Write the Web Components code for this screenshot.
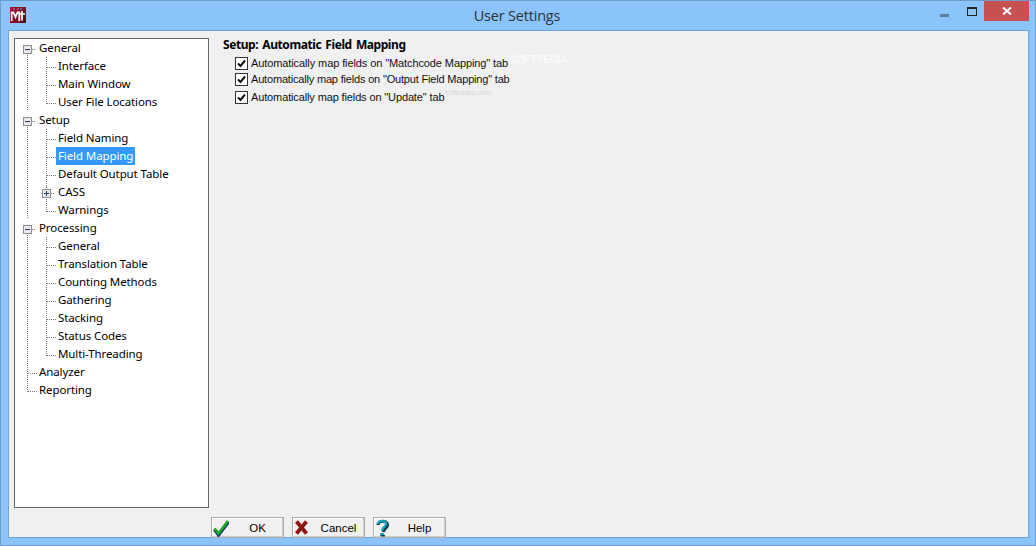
<!DOCTYPE html>
<html><head><meta charset="utf-8"><title>User Settings</title>
<style>
html,body{margin:0;padding:0;width:1036px;height:546px;overflow:hidden;background:#8ac4fb}
</style></head><body>
<app-window>
<title-bar slot="title">User Settings</title-bar>
<tree-view slot="tree">
 <tree-row cells="-" >General</tree-row>
 <tree-row cells="I L">Interface</tree-row>
 <tree-row cells="I L">Main Window</tree-row>
 <tree-row cells="I l">User File Locations</tree-row>
 <tree-row cells="-">Setup</tree-row>
 <tree-row cells="I L">Field Naming</tree-row>
 <tree-row cells="I L" selected>Field Mapping</tree-row>
 <tree-row cells="I L">Default Output Table</tree-row>
 <tree-row cells="I +">CASS</tree-row>
 <tree-row cells="I l">Warnings</tree-row>
 <tree-row cells="-">Processing</tree-row>
 <tree-row cells="I L">General</tree-row>
 <tree-row cells="I L">Translation Table</tree-row>
 <tree-row cells="I L">Counting Methods</tree-row>
 <tree-row cells="I L">Gathering</tree-row>
 <tree-row cells="I L">Stacking</tree-row>
 <tree-row cells="I L">Status Codes</tree-row>
 <tree-row cells="I l">Multi-Threading</tree-row>
 <tree-row cells="L">Analyzer</tree-row>
 <tree-row cells="l">Reporting</tree-row>
</tree-view>
<settings-panel slot="panel" heading="Setup: Automatic Field Mapping">
 <check-row style="--ls:-.1px">Automatically map fields on "Matchcode Mapping" tab</check-row>
 <check-row style="--ls:-.18px">Automatically map fields on "Output Field Mapping" tab</check-row>
 <check-row style="--ls:-.13px" gap>Automatically map fields on "Update" tab</check-row>
</settings-panel>
<dlg-button slot="buttons" icon="ok">OK</dlg-button>
<dlg-button slot="buttons" icon="cancel">Cancel</dlg-button>
<dlg-button slot="buttons" icon="help">Help</dlg-button>
</app-window>
<script>
const FONT='"Noto Sans","Open Sans",sans-serif';
function def(name,html,init){
  customElements.define(name,class extends HTMLElement{
    constructor(){super();this.attachShadow({mode:'open'});this.shadowRoot.innerHTML=html;}
    connectedCallback(){init&&init.call(this,this.shadowRoot);}
  });
}
def('app-window',`<style>
:host{display:flex;flex-direction:column;box-sizing:border-box;width:1036px;height:546px;background:#8ac4fb;border:1px solid #6d9cc9;font:11.5px ${FONT};letter-spacing:-.1px;color:#000}
.client{flex:none;margin:0 6px 0 7px;height:508px;box-sizing:border-box;background:#f0f0f0;border:1px solid #6fa3d4;display:grid;grid-template-columns:195px 1fr;grid-template-rows:470px 1fr;padding:7px 0 0 5px}
.buttons{grid-column:2;display:flex;gap:8px;padding:9px 0 0 2px}
</style><slot name="title"></slot><div class="client"><slot name="tree"></slot><slot name="panel"></slot><div class="buttons"><slot name="buttons"></slot></div></div>`);
def('title-bar',`<style>
:host{display:flex;align-items:flex-start;height:29px;flex:none;position:relative}
.ic{width:16px;height:16px;margin:6px 0 0 9px;flex:none}
.t{position:absolute;left:0;right:2px;top:5px;text-align:center;font:14.5px "Open Sans",sans-serif;letter-spacing:-.2px;color:#333;line-height:20px}
.ctl{margin-left:auto;display:flex}
.min{width:9px;height:3px;background:#5f7f9f;margin:13px 0 0 0}
.max{width:10px;height:9px;box-sizing:border-box;border:1px solid #222;border-top-width:2px;margin:6px 0 0 18px}
.close{width:45px;height:20px;background:#c75050;margin:0 6px 0 7px;display:flex;align-items:center;justify-content:center}
</style>
<svg class="ic" viewBox="0 0 16 16"><defs><linearGradient id="g" x1="0" y1="0" x2="1" y2="1"><stop offset="0" stop-color="#b0122e"/><stop offset="1" stop-color="#5c0614"/></linearGradient></defs><rect width="16" height="16" fill="url(#g)"/><rect x="3" y="1" width="2" height="2" fill="#7d5f8f"/><rect x="7" y="1" width="2" height="2" fill="#7d5f8f"/><rect x="10" y="1" width="2" height="2" fill="#7d5f8f"/><path d="M1.700 14V5.500h1.800L5.500 10l2-4.500h1.800V14" fill="none" stroke="#fff" stroke-width="1.800"/><path d="M12 4v9.500M10 7h5" fill="none" stroke="#fff" stroke-width="1.700"/></svg>
<div class="t"><slot></slot></div>
<div class="ctl"><div class="min"></div><div class="max"></div><div class="close"><svg width="10" height="8" viewBox="0 0 10 8"><path d="M1 .5l8 7M9 .5l-8 7" stroke="#fff" stroke-width="2" fill="none"/></svg></div></div>`);
def('tree-view',`<style>
:host{display:flex;flex-direction:column;box-sizing:border-box;width:195px;height:470px;background:#fff;border:1px solid #666;padding:0 0 0 3px}
</style><slot></slot>`);
function cellSvg(k){
  const d='stroke="#777" stroke-dasharray="1 1" shape-rendering="crispEdges"';
  let s='';
  if(k==='I'||k==='L'||k==='+') s+=`<path d="M9.500 0V18" ${d}/>`;
  if(k==='l') s+=`<path d="M9.500 0V11" ${d}/>`;
  if(k==='L'||k==='l') s+=`<path d="M10 10.500H19" ${d}/>`;
  if(k==='-'||k==='+'){
    s=(k==='-'?`<path d="M9.500 14V18" ${d}/>`:`<path d="M9.500 0V18" ${d}/>`);
    s+=`<path d="M14 10.500H18" ${d}/><rect x="5.500" y="6.500" width="8" height="8" fill="#e8e8ee" stroke="#8e8f8f" shape-rendering="crispEdges"/><path d="M7 10.500h5" stroke="#2c3a66" shape-rendering="crispEdges"/>`;
    if(k==='+') s+=`<path d="M9.500 8v5" stroke="#2c3a66" shape-rendering="crispEdges"/>`;
  }
  return `<svg width="19" height="18" viewBox="0 0 19 18" style="flex:none;display:block">${s}</svg>`;
}
def('tree-row',`<style>
:host{display:flex;height:18px;flex:none;align-items:stretch}
.g{display:flex}
.l{padding:0 2px;line-height:18px;white-space:nowrap}
:host([selected]) .l{background:#3399ff;color:#fff}
</style><div class="g"></div><div class="l"><slot></slot></div>`,function(r){
  r.querySelector('.g').innerHTML=(this.getAttribute('cells')||'').split(' ').map(cellSvg).join('');
});
def('settings-panel',`<style>
:host{display:block;padding:0 0 0 14px;position:relative}
h1{font:bold 12px ${FONT};letter-spacing:-.43px;word-spacing:1.500px;margin:0;height:17px;line-height:14px}
.rows{display:flex;flex-direction:column;padding-left:12px}
.wm{position:absolute;white-space:nowrap;pointer-events:none;letter-spacing:0;font-family:"Liberation Sans",sans-serif}
.a{left:301px;top:16px;font-size:10px;font-weight:bold;color:#fafafa}
.b{left:236px;top:50px;font-size:7.500px;color:#d8d8d8}
</style><h1></h1><div class="rows"><slot></slot></div><span class="wm a">SOFTPEDIA</span><span class="wm b">softpedia.com</span>`,function(r){r.querySelector('h1').textContent=this.getAttribute('heading')});
def('check-row',`<style>
:host{display:flex;align-items:center;height:16px;font:11px "Liberation Sans",sans-serif;letter-spacing:var(--ls,0);color:#111}
:host([gap]){margin-top:2px}
.b{width:13px;height:13px;box-sizing:border-box;border:1px solid #333;background:#fff;margin-right:3px;flex:none;display:block}
.t{white-space:nowrap}
</style><svg class="b" viewBox="0 0 11 11"><path d="M2 5.500l2.500 2.500L9 2.500" fill="none" stroke="#111" stroke-width="2"/></svg><span class="t"><slot></slot></span>`);
const ICONS={
 ok:`<path d="M1.500 10.500l4 5.500L15.500 3" fill="none" stroke="#0d2a6a" stroke-width="3.200"/><path d="M1.500 9.500l4 5L15 2" fill="none" stroke="#1fa52a" stroke-width="2.800"/>`,
 cancel:`<path d="M2.500 2.500l10 12M12.500 2.500l-10 12" fill="none" stroke="#8e1414" stroke-width="3.800"/>`,
 help:`<path d="M3 6c0-5 9.500-5 9.500 0 0 3-4 3-4 7" fill="none" stroke="#0d3a55" stroke-width="3.200"/><path d="M3 5c0-4 8-4 8 0 0 3-4 3-4 7" fill="none" stroke="#1aa7c0" stroke-width="2.200"/><rect x="5" y="14" width="4" height="3" fill="#1aa7c0"/><rect x="6" y="16" width="4" height="1.500" fill="#0d3a55"/>`
};
def('dlg-button',`<style>
:host{display:flex;align-items:center;box-sizing:border-box;width:73px;height:21px;background:#f0f0f0;border:1px solid #adadad;box-shadow:inset -1px -1px 0 #cfcfcf,inset 1px 1px 0 #fff;font:11.500px "Liberation Sans",sans-serif;letter-spacing:0}
svg{width:16px;height:18px;margin-left:1px;flex:none}
.t{flex:1;text-align:center;padding-left:3px}
</style><svg viewBox="0 0 16 18"></svg><span class="t"><slot></slot></span>`,function(r){r.querySelector('svg').innerHTML=ICONS[this.getAttribute('icon')]});
</script></body></html>
